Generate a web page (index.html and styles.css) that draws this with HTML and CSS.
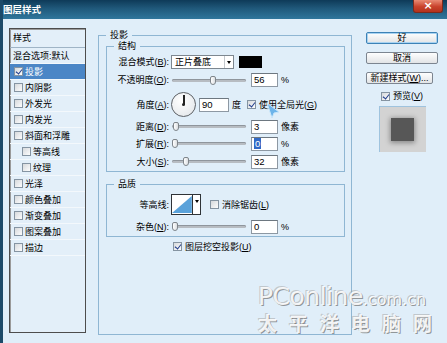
FILE: index.html
```html
<!DOCTYPE html>
<html lang="zh-CN">
<head>
    <meta charset="UTF-8">
    <title>图层样式</title>
    <link rel="stylesheet" href="styles.css">
</head>
<body>
    <div class="dialog">
        <div class="titlebar">
            <span class="title">图层样式</span>
            <span class="close">×</span>
        </div>
        <div class="content">
            <div class="style-list">
                <div class="list-head">样式</div>
                <div class="list-item">混合选项:默认</div>
                <div class="list-item selected"><span class="cb on"></span>投影</div>
                <div class="list-item"><span class="cb"></span>内阴影</div>
                <div class="list-item"><span class="cb"></span>外发光</div>
                <div class="list-item"><span class="cb"></span>内发光</div>
                <div class="list-item"><span class="cb"></span>斜面和浮雕</div>
                <div class="list-item sub"><span class="cb"></span>等高线</div>
                <div class="list-item sub"><span class="cb"></span>纹理</div>
                <div class="list-item"><span class="cb"></span>光泽</div>
                <div class="list-item"><span class="cb"></span>颜色叠加</div>
                <div class="list-item"><span class="cb"></span>渐变叠加</div>
                <div class="list-item"><span class="cb"></span>图案叠加</div>
                <div class="list-item"><span class="cb"></span>描边</div>
            </div>

            <fieldset class="group effect">
                <legend>投影</legend>
                <fieldset class="group struct">
                    <legend>结构</legend>
                    <div class="rows">
                        <div class="row">
                            <span class="lbl">混合模式(<u>B</u>):</span>
                            <div class="select"><span>正片叠底</span><span class="arrow"></span></div>
                            <span class="swatch"></span>
                        </div>
                        <div class="row">
                            <span class="lbl">不透明度(<u>O</u>):</span>
                            <div class="slider"><span class="thumb" style="left:38px"></span></div>
                            <span class="num">56</span>
                            <span class="unit">%</span>
                        </div>
                        <div class="row">
                            <span class="lbl">角度(<u>A</u>):</span>
                            <span class="dial"></span>
                            <span class="num wide">90</span>
                            <span class="unit">度</span>
                            <span class="cb on gap"></span>
                            <span>使用全局光(<u>G</u>)</span>
                        </div>
                        <div class="row">
                            <span class="lbl">距离(<u>D</u>):</span>
                            <div class="slider"><span class="thumb" style="left:1px"></span></div>
                            <span class="num">3</span>
                            <span class="unit">像素</span>
                        </div>
                        <div class="row">
                            <span class="lbl">扩展(<u>R</u>):</span>
                            <div class="slider"><span class="thumb" style="left:0"></span></div>
                            <span class="num"><span class="sel">0</span></span>
                            <span class="unit">%</span>
                        </div>
                        <div class="row">
                            <span class="lbl">大小(<u>S</u>):</span>
                            <div class="slider"><span class="thumb" style="left:11px"></span></div>
                            <span class="num">32</span>
                            <span class="unit">像素</span>
                        </div>
                    </div>
                </fieldset>

                <fieldset class="group quality">
                    <legend>品质</legend>
                    <div class="rows">
                        <div class="row">
                            <span class="lbl">等高线:</span>
                            <div class="contour">
                                <svg class="curve" width="22" height="19" viewBox="0 0 22 19">
                                    <polygon points="0,19 22,0 22,19" fill="#5aa2da"/>
                                </svg>
                                <span class="arrow"></span>
                            </div>
                            <span class="cb gap-l"></span>
                            <span>消除锯齿(<u>L</u>)</span>
                        </div>
                        <div class="row">
                            <span class="lbl">杂色(<u>N</u>):</span>
                            <div class="slider"><span class="thumb" style="left:0"></span></div>
                            <span class="num">0</span>
                            <span class="unit">%</span>
                        </div>
                    </div>
                </fieldset>

                <div class="knockout"><span class="cb on"></span>图层挖空投影(<u>U</u>)</div>
            </fieldset>

            <div class="side">
                <div class="btn default">好</div>
                <div class="btn">取消</div>
                <div class="btn narrow">新建样式(<u>W</u>)...</div>
                <div class="preview-check"><span class="cb on"></span>预览(<u>V</u>)</div>
                <div class="preview"><span class="shape"></span></div>
            </div>
        </div>

        <svg class="cursor" width="16" height="18" viewBox="0 0 16 18">
            <polygon points="2,1 14,10 9,11 7,16" fill="#6db4ea" stroke="#c9e6fa" stroke-width="1"/>
        </svg>

        <div class="watermark">
            <div class="wm-en">PConline<span class="wm-small">.com.cn</span></div>
            <div class="wm-cn">太平洋电脑<span class="wm-last">网</span></div>
        </div>
    </div>
</body>
</html>
```

FILE: styles.css
```css
* {
    box-sizing: border-box;
}
html, body {
    margin: 0;
}
body {
    width: 447px;
    height: 343px;
    overflow: hidden;
    font: 9px/12px "Liberation Sans", "Noto Sans CJK SC", sans-serif;
    color: #000;
    background: #e0eef9;
}
.dialog {
    position: relative;
    height: 343px;
    border-left: 3px solid #1c4a69;
    background: #e0eef9;
}
.titlebar {
    height: 19px;
    display: flex;
    justify-content: space-between;
    background: linear-gradient(#0e3a58, #20597b 45%, #2f769c);
}
.title {
    color: #fff;
    font-weight: bold;
    font-size: 9.5px;
    line-height: 20px;
}
.close {
    width: 30px;
    height: 13px;
    margin-right: 4px;
    border: 1px solid #7b2a1c;
    border-top: 0;
    border-radius: 0 0 3px 3px;
    background: linear-gradient(#e98b74, #c9432c 55%, #b3321d);
    color: #fff;
    font: bold 11px/12px "DejaVu Sans", sans-serif;
    text-align: center;
}

.content {
    display: flex;
    align-items: flex-start;
    padding: 9px 0 0 6px;
}

/* left list of effects */
.style-list {
    width: 77px;
    height: 305px;
    border: 1px solid #4d4d4d;
    box-shadow: inset 1px 1px 0 #9a9a9a;
    background: #e3eff9;
}
.list-head {
    height: 19px;
    line-height: 19px;
    padding-left: 3px;
    border-bottom: 1px solid #9fb4c6;
}
.list-item {
    height: 16px;
    display: flex;
    align-items: center;
    padding-left: 3px;
    border-bottom: 1px solid #f3f8fc;
}
.list-item .cb {
    margin: 0 2px 0 1px;
}
.list-item.sub {
    padding-left: 11px;
}
.list-item.selected {
    background: #4b86c6;
    color: #fff;
}

/* checkbox */
.cb {
    position: relative;
    display: inline-block;
    flex: none;
    width: 9px;
    height: 9px;
    border: 1px solid #8594a2;
    background: linear-gradient(135deg, #d6d9dc, #fdfdfd);
    margin-right: 3px;
}
.cb.on::after {
    content: "";
    position: absolute;
    left: 2px;
    top: 0;
    width: 3px;
    height: 5px;
    border: solid #1e3c8c;
    border-width: 0 1.5px 1.5px 0;
    transform: rotate(38deg);
}

/* group boxes */
.group {
    margin: 0;
    padding: 0;
    border: 1px solid #8fb6d3;
    min-width: 0;
}
.group legend {
    padding: 0 4px;
    line-height: 10px;
    font-size: 9px;
}
.effect {
    width: 254px;
    height: 305px;
    margin: 2px 0 0 12px;
    padding: 0 6px 0 7px;
}
.effect > legend {
    margin-left: 0;
}
.struct {
    margin-top: 1px;
    padding: 3px 0 1px;
}
.struct legend,
.quality legend {
    margin-left: 7px;
}
.struct .rows {
    display: grid;
    grid-template-rows: 16px 20px 29px 15px 19px 17px;
}
.quality {
    margin-top: 7px;
    padding: 3px 0 0;
}
.quality .rows {
    display: grid;
    grid-template-rows: 25px 19px;
}
.row {
    display: flex;
    align-items: center;
    white-space: nowrap;
}
.lbl {
    width: 62px;
    text-align: right;
    margin-right: 2px;
}

.select {
    display: flex;
    justify-content: space-between;
    align-items: center;
    width: 63px;
    height: 14px;
    border: 1px solid #7d8790;
    background: #fff;
    padding-left: 3px;
}
.arrow {
    width: 9px;
    height: 100%;
    border-left: 1px solid #c3c8cd;
    position: relative;
}
.arrow::after {
    content: "";
    position: absolute;
    left: 2px;
    top: 5px;
    border: 2.5px solid transparent;
    border-top: 3px solid #000;
}
.swatch {
    width: 23px;
    height: 12px;
    margin-left: 5px;
    background: #000;
}

.slider {
    position: relative;
    width: 74px;
    height: 11px;
    margin-left: 1px;
}
.slider::before {
    content: "";
    position: absolute;
    left: 0;
    right: 0;
    top: 4px;
    height: 3px;
    border-radius: 2px;
    background: #b7bcc2;
    box-shadow: inset 0 1px 0 #8f959c;
}
.thumb {
    position: absolute;
    top: 1px;
    width: 6px;
    height: 9px;
    border: 1px solid #7f858b;
    border-radius: 2px 2px 3px 3px;
    background: linear-gradient(90deg, #fff, #dcdfe2);
}
.num {
    width: 27px;
    height: 14px;
    margin-left: 5px;
    padding-left: 2px;
    border: 1px solid #8d98a3;
    border-top-color: #6d7780;
    background: #fff;
    font-size: 9.5px;
    line-height: 12px;
}
.num.wide {
    width: 30px;
    margin-left: 3px;
}
.sel {
    background: #3169c6;
    color: #fff;
    padding: 0 1px;
}
.unit {
    margin-left: 3px;
}
.cb.gap {
    margin-left: 6px;
}
.cb.gap-l {
    margin-left: 9px;
}

.dial {
    position: relative;
    width: 25px;
    height: 25px;
    border: 1px solid #5d6166;
    border-radius: 50%;
    background: radial-gradient(circle at 40% 35%, #fff, #dfe3e7);
}
.dial::before {
    content: "";
    position: absolute;
    left: 11px;
    top: 2px;
    width: 1.5px;
    height: 10px;
    background: #222;
}
.dial::after {
    content: "";
    position: absolute;
    left: 10px;
    top: 10px;
    width: 3px;
    height: 3px;
    border-radius: 50%;
    background: #222;
}

.contour {
    display: flex;
    width: 30px;
    height: 21px;
    border: 1px solid #2f3337;
    background: #fff;
}
.curve {
    display: block;
}
.contour .arrow {
    border-left-color: #2f3337;
}

.knockout {
    display: flex;
    align-items: center;
    height: 13px;
    margin-top: 3px;
    padding-left: 67px;
}

/* right column */
.side {
    width: 72px;
    margin: 4px 0 0 14px;
    display: flex;
    flex-direction: column;
    align-items: center;
}
.btn {
    width: 72px;
    height: 12px;
    margin-bottom: 8px;
    border: 1px solid #7c8590;
    border-radius: 2px;
    background: linear-gradient(#fefefe, #e2e4e6);
    text-align: center;
    line-height: 10px;
}
.btn.default {
    border-color: #3d82b6;
    box-shadow: inset 0 0 0 1px #a9d3f1;
}
.btn.narrow {
    width: 67px;
    align-self: flex-start;
}
.preview-check {
    display: flex;
    align-items: center;
    height: 12px;
    margin-top: -2px;
}
.preview {
    display: flex;
    align-items: center;
    justify-content: center;
    width: 47px;
    height: 46px;
    margin-top: 4px;
    background: #d3d3d3;
    border-top: 1px solid #9fc3de;
    border-left: 1px solid #9fc3de;
}
.shape {
    width: 23px;
    height: 23px;
    background: #575757;
    box-shadow: 0 1px 5px 1px rgba(0, 0, 0, 0.35);
}

/* overlays */
.cursor {
    position: absolute;
    left: 262px;
    top: 102px;
}
.watermark {
    position: absolute;
    left: 255px;
    top: 284px;
    white-space: nowrap;
    color: rgba(255, 255, 255, 0.9);
    text-shadow: 1px 1px 0 rgba(110, 110, 110, 0.7), -1px -1px 0 rgba(160, 160, 160, 0.5);
}
.wm-en {
    font: 25px/25px "DejaVu Sans", sans-serif;
    letter-spacing: -0.5px;
}
.wm-small {
    font-size: 16px;
    letter-spacing: 0;
}
.wm-cn {
    font: bold 19px/21px "Noto Sans CJK SC", sans-serif;
    letter-spacing: 12px;
}
.wm-last {
    letter-spacing: 0;
}
```
